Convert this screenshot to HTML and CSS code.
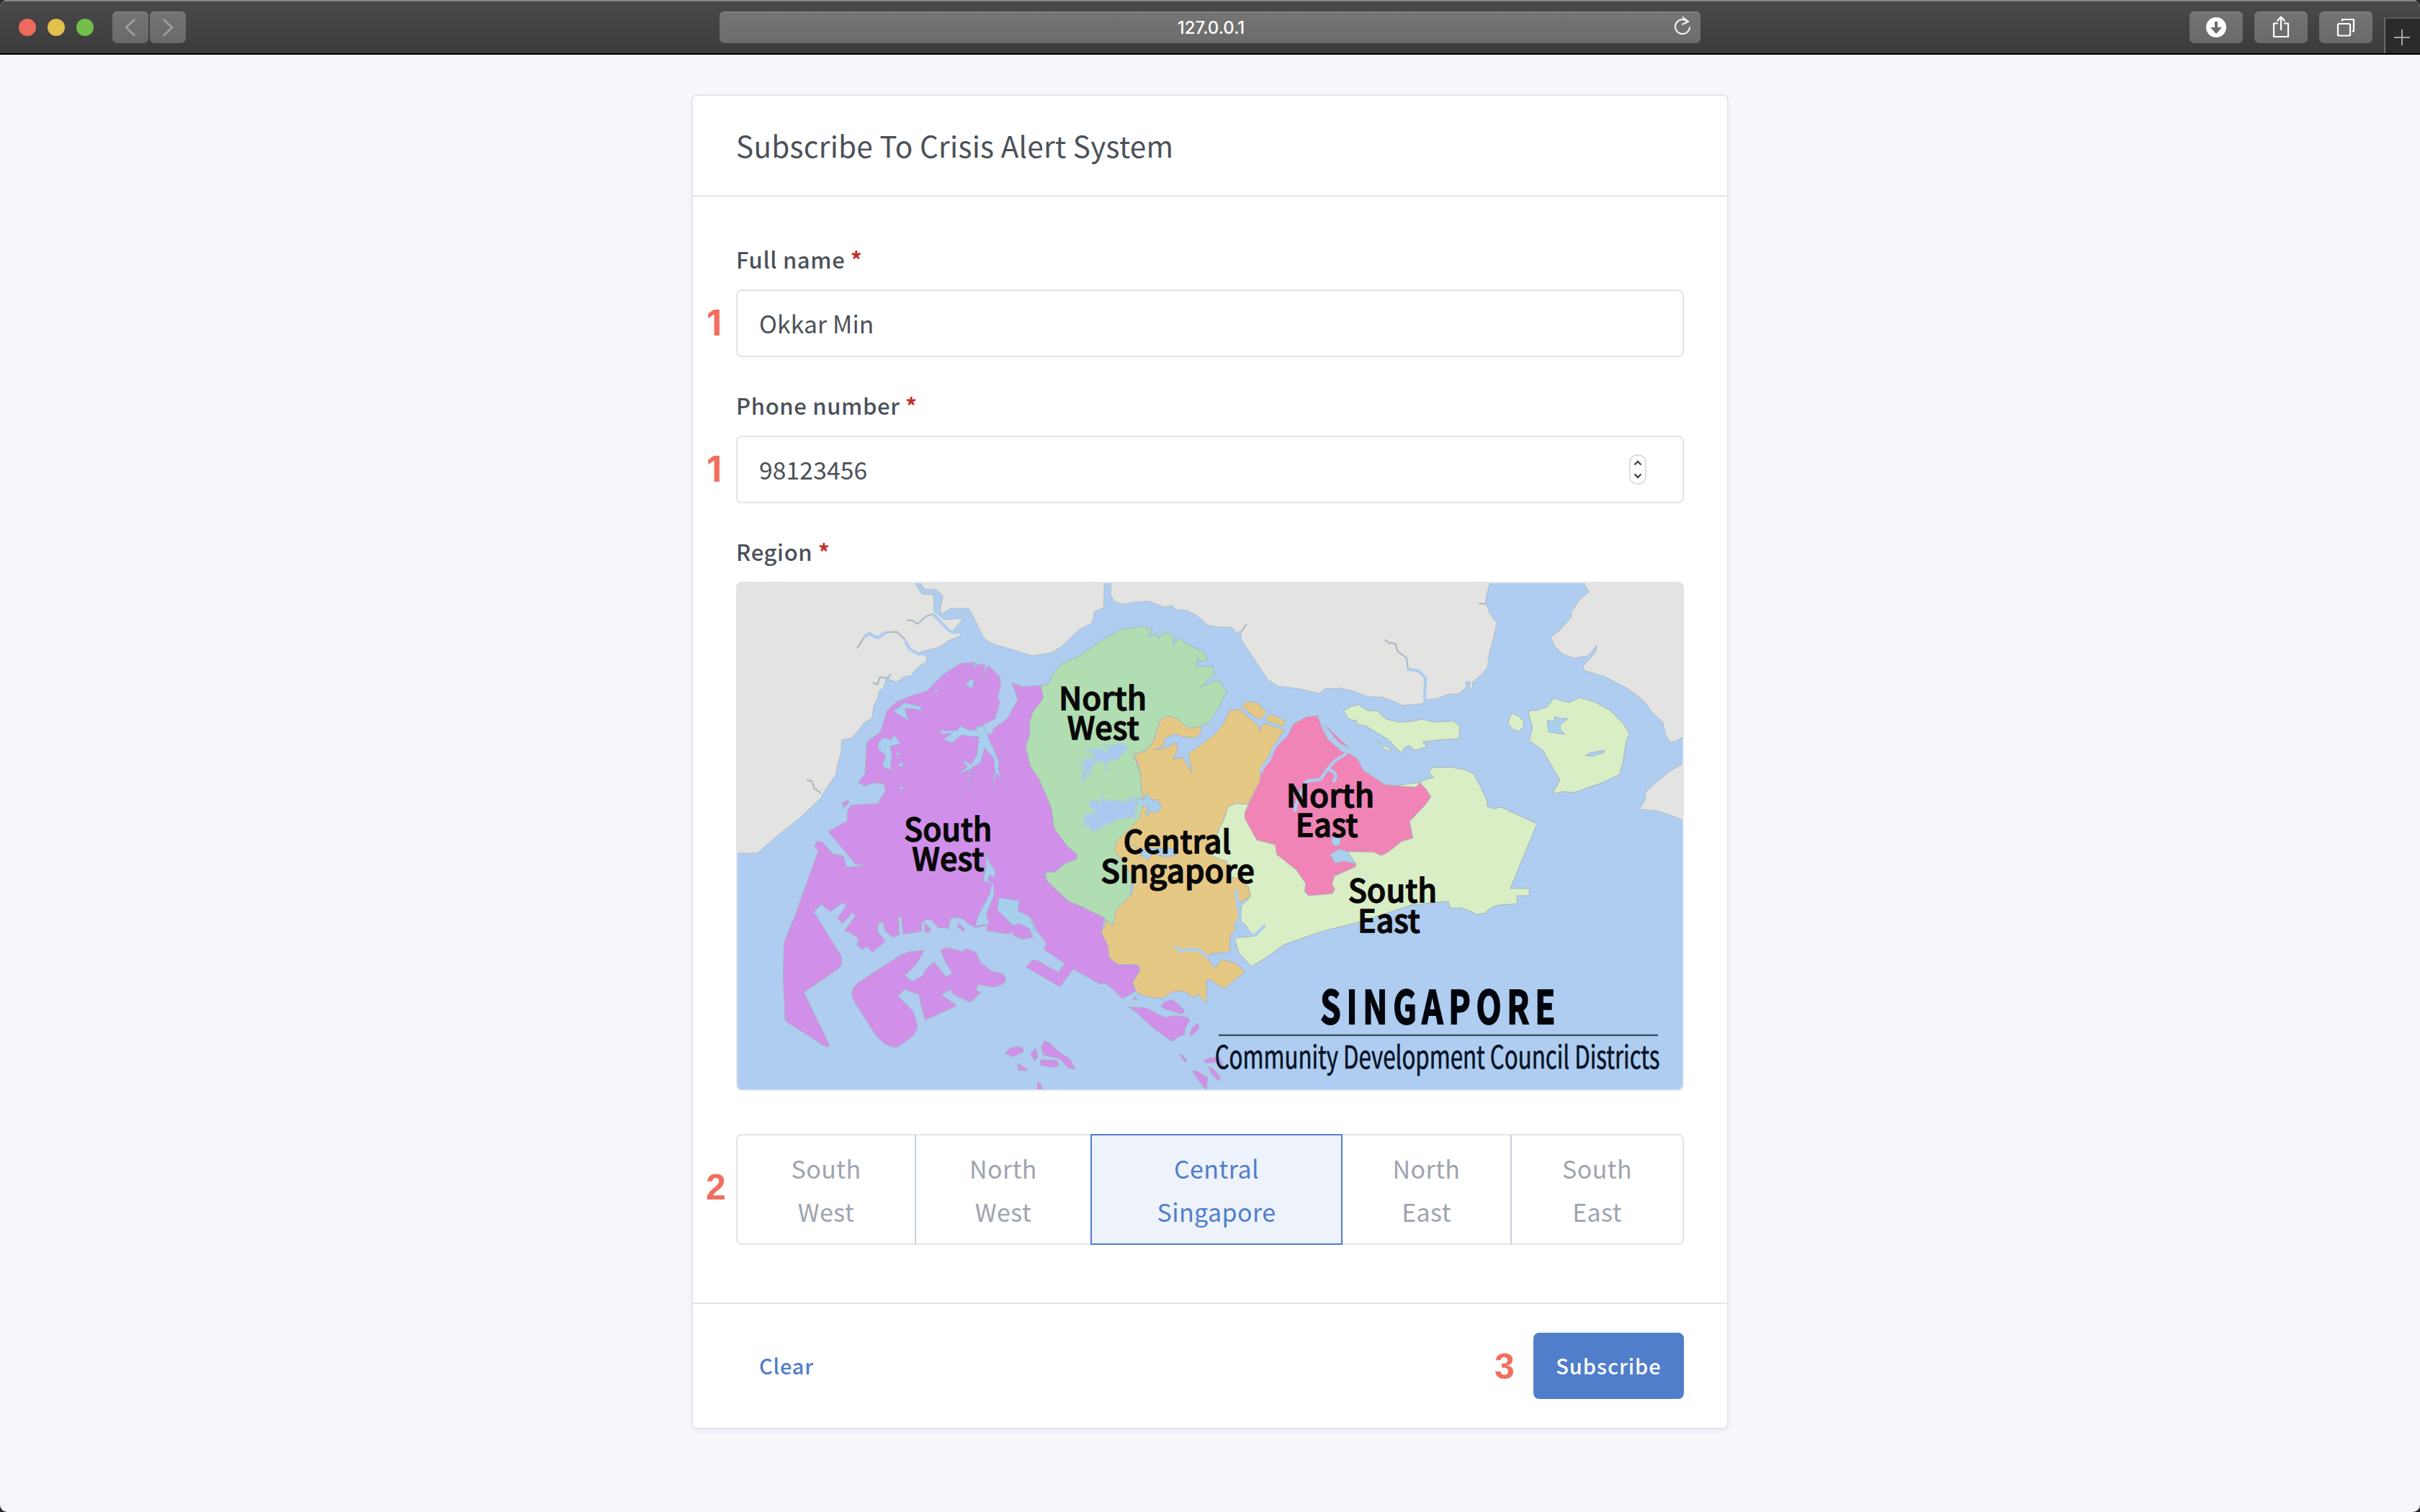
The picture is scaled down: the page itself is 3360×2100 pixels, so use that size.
FILE: index.html
```html
<!DOCTYPE html>
<html lang="en">
<head>
<meta charset="utf-8">
<title>Subscribe To Crisis Alert System</title>
<link rel="stylesheet" href="styles.css">
</head>
<body>
<div class="window">
  <header class="toolbar">
    <div class="lights"><i class="light red"></i><i class="light yellow"></i><i class="light green"></i></div>
    <div class="nav">
      <span class="tool nav-btn"><svg width="50" height="44" viewBox="0 0 50 44"><path d="M30.500 11.500 19 22l11.500 11"/></svg></span>
      <span class="tool nav-btn"><svg width="50" height="44" viewBox="0 0 50 44"><path d="M19.500 11.500 31 22 19.500 33"/></svg></span>
    </div>
    <div class="address"><span>127.0.0.1</span>
      <svg class="reload" width="28" height="30" viewBox="0 0 28 30"><path d="M21.500 8.500A10 10 0 1 0 24 15.500"/><path d="M14 1.500l8 6.500-8.500 4"/></svg>
    </div>
    <div class="actions">
      <span class="tool"><svg width="74" height="44" viewBox="0 0 74 44"><circle cx="37" cy="22" r="14" fill="#fff"/><path d="M35 14h4v8h6l-8 9-8-9h6z" fill="#6c6c6c"/></svg></span>
      <span class="tool"><svg width="74" height="44" viewBox="0 0 74 44" class="line"><path d="M33 16.500h-6V35h20V16.500h-6M37 26V8M31.500 13.500 37 7.500l5.500 6"/></svg></span>
      <span class="tool"><svg width="74" height="44" viewBox="0 0 74 44" class="line"><rect x="26" y="17" width="17" height="16.500" rx="1.500"/><path d="M32 13.500V11h16v16.500h-2.500"/></svg></span>
    </div>
    <div class="new-tab"><svg width="48" height="50" viewBox="0 0 48 50"><path d="M12 26h22M23 15v22"/></svg></div>
  </header>

  <main class="page">
    <form class="card">
      <h1 class="card-header">Subscribe To Crisis Alert System</h1>
      <div class="card-body">
        <div class="field">
          <label class="label" for="name">Full name <b class="req">*</b></label>
          <div class="control"><span class="step one">1</span><input class="input" id="name" type="text" value="Okkar Min"></div>
        </div>
        <div class="field">
          <label class="label" for="phone">Phone number <b class="req">*</b></label>
          <div class="control"><span class="step one">1</span><input class="input" id="phone" type="text" value="98123456">
            <svg class="spinner" width="24" height="42" viewBox="0 0 24 42"><rect x="1" y="1" width="22" height="40" rx="10"/><path d="M7.500 14.500 12 10l4.500 4.500M7.500 27.500 12 32l4.500-4.500"/></svg>
          </div>
        </div>
        <div class="field">
          <div class="label">Region <b class="req">*</b></div>
          <div class="map">
            <svg width="1312" height="703" viewBox="72 60 3936 2109" preserveAspectRatio="none">
              <g class="johor">
                <path d="M40 30H800L812 62 840 105 888 108 890 178 935 212 1012 206 985 240 970 258 1003 262 1000 280 950 300 915 325 830 348 860 368 860 385 815 418 797 445 765 450 735 472 705 462 690 460 682 492 660 512 658 535 640 570 632 620 600 642 570 680 545 706 507 712 503 770 487 820 482 858 435 925 420 955 330 1040 240 1110 155 1185 40 1186z"/>
                <path d="M835 30V62L850 85 900 88 928 115 916 165 922 190 960 165 1035 165 1060 210 1085 265Q1100 300 1140 315L1220 338 1300 362 1380 350 1420 325 1500 250 1550 225 1558 180 1598 160 1600 30z"/>
                <path d="M1632 30L1625 105 1640 135 1675 148 1720 140 1785 135 1850 160 1885 153 1895 170 1940 172 1985 195 2030 235 2080 243 2130 243 2150 265 2168 262 2170 295 2200 340 2250 415 2280 460 2320 488 2410 500 2496 520 2518 500 2582 497 2646 512 2695 533 2754 535 2796 548 2845 570 2925 562 2941 545 2984 542 3032 523 3075 520 3107 495 3105 470 3125 472 3120 490 3135 510 3132 475 3171 440 3195 412 3204 350 3220 290 3234 225 3204 185 3188 140 3191 110 3206 62V30z"/>
                <path d="M3600 30V65L3619 95 3579 130 3544 180 3546 200 3498 255 3459 285 3477 325 3514 358 3557 372 3616 362 3651 318 3648 345 3595 405 3598 423 3686 450 3782 500 3841 545 3884 600 3927 640 3937 690 3956 722 3980 718 4030 690V30z"/>
                <path d="M4030 800L3954 845 3900 890 3855 928 3852 965 3827 1002 3900 1008 3954 1025 4030 1055z"/>
              </g>
              <g class="creek">
                <path class="thin" d="M778 215 800 215 822 230 858 198 885 188"/><path d="M885 188 910 212 940 245 965 265 1000 262"/>
                <path class="thin" d="M570 332 605 275M690 265 735 262 770 295"/><path d="M600 285 620 270 655 288 690 265M770 300 790 335 825 355 880 350"/>
                <path class="thin" d="M635 475 655 482 665 452 700 455 710 438M360 880 382 885 392 915 420 935"/>
                <path class="thin" d="M2170 262 2192 232M2768 295 2785 308 2812 312 2822 345 2858 370 2865 418"/>
                <path d="M2860 418 2910 425 2938 455 2935 510 2935 550"/>
                <path class="thin" d="M3160 145H3190"/>
              </g>
              <g class="se">
                <path d="M2596 592 2625 575 2657 566 2695 590 2738 592 2770 625 2829 640 2882 635 2925 627 2968 638 3054 635 3080 655 3077 708 3000 712 2925 722 2946 740 2893 757 2871 735 2850 745 2841 768 2812 745 2791 718 2764 700 2689 655 2657 650 2649 632 2620 628z"/>
                <path d="M3370 590 3402 590 3445 575 3471 540 3536 558 3579 536 3643 555 3707 590 3761 645 3788 690 3775 710 3761 800 3745 858 3664 895 3557 932 3514 928 3466 938 3498 880 3439 780 3429 758 3370 715 3384 660 3368 610z"/>
                <path d="M3300 603 3325 612 3345 635 3347 658 3325 677 3300 668 3282 645 3288 618z"/>
                <path d="M2735 715 2760 735 2785 745 2795 765 2765 750z"/>
              </g>
              <path class="nw" d="M1335 488 1365 480 1385 440 1415 400 1500 360 1600 290 1680 250 1760 240 1800 250 1780 285 1820 268 1825 290 1850 262 1890 280 1885 318 1910 290 1960 322 2015 345 2028 380 1998 385 1990 368 1985 408 2050 405 2060 440 2000 492 2075 462 2110 512 2070 590 2035 640 2000 658 1950 665 1905 625 1870 613 1830 640 1805 720 1780 755 1720 775 1750 850 1760 950 1740 1130 1700 1400 1635 1490 1600 1455 1510 1410 1450 1385 1360 1300 1352 1265 1395 1262 1440 1225 1480 1210 1485 1190 1440 1150 1390 1080 1380 1000 1330 880 1290 820 1272 740 1290 690 1288 640 1300 600 1345 540z"/>
              <g class="sw">
                <path d="M1215 475 1260 492 1335 485 1345 540 1300 600 1288 640 1290 690 1272 740 1290 820 1330 880 1380 1000 1390 1080 1440 1150 1485 1190 1485 1210 1440 1225 1395 1262 1352 1265 1360 1300 1450 1385 1510 1410 1600 1455 1588 1515 1615 1570 1620 1620 1655 1648 1740 1650 1750 1670 1717 1725 1730 1760 1675 1792 1640 1755 1600 1725 1585 1732 1470 1668 1415 1742 1275 1660 1300 1630 1320 1632 1408 1682 1435 1645 1348 1585 1358 1560 1320 1510 1296 1455 1275 1475 1303 1535 1263 1543 1223 1530 1217 1512 1200 1522 1108 1508 1114 1485 1062 1495 1033 1480 1010 1458 975 1452 959 1458 951 1498 907 1495 880 1465 861 1460 840 1475 838 1510 761 1522 755 1450 742 1450 746 1525 718 1535 687 1510 678 1470 660 1475 655 1510 687 1552 634 1598 614 1575 591 1585 571 1570 575 1540 540 1515 517 1510 563 1445 551 1432 509 1478 488 1455 525 1405 511 1390 459 1428 419 1398 390 1430 505 1615 505 1650 494 1665 348 1765 453 1980 448 1993 425 1983 270 1883 262 1680 266 1555 310 1450 408 1175 393 1155 402 1135 425 1138 471 1190 511 1195 528 1245 603 1235 563 1230 530 1190 450 1095 530 1050 530 1010 545 985 660 978 668 955 690 925 680 895 640 892 600 905 575 890 603 855 610 730 620 712 665 685 680 640 695 590 735 555 800 528 860 510 930 440 1000 395 1060 390 1055 412 1080 398 1105 400 1095 450 1115 402 1165 450 1168 490 1155 535 1165 555 1145 625 1085 655 1095 690 1130 690 1140 665 1195 625 1240 545z"/>
                <path d="M850 1590 792 1595Q760 1602 735 1620L574 1725Q545 1750 549 1780L563 1810 626 1910Q660 1965 689 1980 730 2005 750 1985L792 1955Q825 1925 821 1900L804 1845 741 1780 767 1752 829 1775 836 1820 855 1880 985 1820 922 1775 959 1752 970 1772 1042 1807 1085 1765 1065 1755 1073 1732 1137 1743Q1190 1735 1190 1705 1180 1680 1131 1678L1085 1640 1062 1595 1022 1583 1010 1595 941 1577 918 1592 939 1640 967 1685 941 1700 890 1638 855 1670 844 1695 798 1720 769 1695 815 1650z"/>
                <path d="M508 975 530 965 538 972 515 995zM852 1475 875 1500 872 1515 852 1515zM990 1475 1018 1500 1015 1512 990 1495z"/>
                <g transform="translate(1200 930)">
                  <path d="M500 895 575 900 650 940 700 932 750 940 755 955 735 985 735 1010 710 1018 682 1040 600 980 530 915z"/>
                  <path d="M635 893 650 875 680 866 700 878 735 912 725 925 655 905zM755 1010 765 985 790 962 795 985 765 1015zM712 1095 725 1095 745 1120 735 1125z"/>
                  <path d="M-14 1090 5 1068 40 1060 60 1066 63 1082 20 1103zM92 1090 115 1068 122 1105 110 1120zM138 1060 150 1038 170 1045 220 1090 255 1110 280 1155 250 1150 215 1112 145 1095zM135 1115 205 1120 208 1140 190 1148 132 1138zM38 1130 80 1155 75 1162 42 1158zM122 1207 135 1215 142 1240H122z"/>
                  <path d="M765 1162 790 1165 830 1190 825 1240 815 1232zM833 1145 855 1155 885 1190 875 1202 850 1180zM812 1120 840 1108 880 1105 905 1160 870 1125 825 1130zM520 858 532 855 535 865 524 866z"/>
                </g>
              </g>
              <g class="central">
                <path d="M1720 775 1780 755 1805 720 1830 640Q1845 615 1870 613L1905 625 1950 665 2000 658 2005 680 1980 705 1930 700 1890 688 1855 705 1845 740 1805 755 1850 748 1900 725 1905 755 1885 795 1925 785 1965 850 1950 770 2000 735 2060 690 2100 640 2120 590 2165 585 2200 620 2240 650 2248 680 2255 650 2270 645 2350 672 2305 735 2280 790 2250 830 2250 880 2190 1000 2195 982 2150 977 2115 990 2100 1040 2075 1090 2050 1198 2110 1220 2160 1290 2200 1325 2210 1365 2165 1390 2150 1395 2160 1460 2138 1480 2148 1500 2125 1525 2122 1595 2040 1605 2035 1630 2060 1665 2090 1627 2150 1645 2185 1680 2100 1748 2070 1735 2050 1715 2025 1710 2025 1810 1985 1770 1975 1790 1935 1760 1885 1762 1840 1790 1790 1785 1740 1770 1717 1725 1750 1670 1740 1650 1655 1648 1620 1620 1615 1570 1588 1515 1605 1480 1600 1458 1635 1490 1650 1420 1715 1355 1725 1300 1665 1200 1642 1180 1650 1135 1700 1090 1745 1040 1765 970 1755 930 1750 850 1735 800z"/>
                <path d="M2172 572 2195 552 2240 560 2278 600 2250 628 2220 615zM2288 606 2330 620 2355 640 2345 658 2270 630z"/>
              </g>
              <path class="se" d="M2195 982 2150 977 2115 990 2100 1040 2075 1090 2050 1198 2110 1220 2130 1285 2160 1290 2200 1325 2210 1365 2170 1405 2168 1470 2185 1480 2205 1512 2228 1530 2142 1538 2160 1600 2212 1658 2280 1615 2350 1565 2510 1510 2650 1475 2807 1425 2882 1400 3032 1385 3041 1415 3086 1412 3129 1428 3150 1440 3188 1435 3200 1418 3236 1402 3319 1395V1362H3370V1332H3291L3402 1062 3321 1025 3252 993 3220 1000 3195 990 3193 965 3166 905 3139 855 3107 838 3043 827 2985 827 2963 830 2952 850 2973 870 2945 875 2914 890z"/>
              <g class="ne">
                <path d="M2488 612 2440 618 2390 645 2360 700 2305 745 2285 800 2255 835 2250 880 2220 940 2185 1015V1040L2235 1130 2312 1150 2318 1190 2400 1255 2438 1310 2435 1345 2450 1362 2550 1353 2560 1335 2548 1315 2558 1280 2645 1242 2648 1230 2605 1178 2721 1180 2754 1195 2786 1178 2839 1135 2885 1122 2871 1052 2936 985 2960 950 2941 920 2914 890 2898 910 2861 908 2770 900 2679 840 2652 790 2625 773 2590 762 2530 710 2505 660z"/>
                <path d="M2516 648 2550 680 2580 710 2620 747 2575 722z"/>
              </g>
              <g class="water">
                <path d="M720 590 750 575 765 558 830 572 842 592 800 582 770 582 775 610 790 635 745 608zM660 720 685 703 712 715 725 692 750 728 708 740 715 790 708 820 718 838 685 828 675 820 690 780 658 750zM735 762 752 770 735 780zM745 815 760 805 762 825 740 822zM1022 485 1040 462 1058 465 1048 500zM895 500 908 505 897 520zM748 902 762 915 750 920zM1060 398 1075 395 1060 412z"/>
                <path d="M1100 655 1065 660 1070 672 1035 672 1003 656 985 675 915 675 920 688 965 685 930 712 965 725 1005 692 1060 700 1078 700 1068 780 1045 815 1005 795 1030 825 990 855 1040 835 1030 912 1045 830 1085 808 1100 745 1140 790 1145 850 1130 918 1152 852 1170 870 1158 838 1160 800 1115 700z"/>
                <path d="M1105 1190 1125 1230 1145 1260 1145 1285 1120 1275 1115 1295 1140 1320 1140 1360 1108 1440 1120 1480 1062 1488 1075 1445 1125 1350 1130 1310 1095 1300 1108 1240z"/>
                <path d="M1162 1370 1246 1383 1240 1425 1290 1450 1312 1510 1290 1500 1250 1480 1217 1485 1154 1420z"/>
                <path class="reservoir" d="M1705 735 1680 725 1650 728 1610 740 1585 720 1600 750 1560 745 1510 750 1540 765 1520 775 1560 785 1470 800 1520 805 1475 830 1515 825 1495 895 1530 870 1530 840 1548 885 1550 820 1580 800 1595 805 1605 855 1612 805 1660 795 1700 745z"/>
                <path class="reservoir" d="M1590 920 1600 960 1660 965 1690 970 1705 948 1730 955 1738 985 1735 1040 1700 1040 1650 1050 1610 1070 1570 1090 1545 1105 1540 1080 1505 1070 1520 1045 1500 1030 1530 1020 1560 1015 1530 985 1545 960 1580 968z"/>
                <path d="M1728 958 1765 960 1775 935 1800 965 1820 960 1838 995 1820 1015 1790 1010 1780 1030 1770 1020 1785 995 1740 985zM1715 1145 1745 1170 1790 1165 1850 1165 1900 1165 1895 1195 1850 1200 1800 1185 1780 1215 1765 1195 1750 1200 1755 1180z"/>
                <path d="M2548 1120 2585 1118 2580 1150 2560 1155 2546 1140zM2540 1190 2580 1168 2615 1180 2648 1230 2600 1218 2560 1225z"/>
                <path d="M3445 630 3470 638 3477 615 3495 622 3530 625 3498 650 3500 672 3520 690 3482 685 3450 680zM3605 778 3621 768 3680 756 3684 765 3632 780z"/>
                <path class="creek-line" d="M2610 768 2560 800 2525 840 2500 878 2440 885M2530 835 2555 845 2565 862 2555 890M2440 885 2425 920 2398 985 2393 1012M2360 690 2310 740 2285 800 2258 830 2253 850"/>
                <path class="creek-line" d="M2148 1335 2155 1400 2165 1450 2150 1480 2165 1520M2205 1525 2230 1525 2270 1485M1895 1575 1915 1592 1960 1585 2000 1592 2030 1620 2130 1605M2133 1590 2145 1520M2250 655 2280 600"/>
              </g>
              <path class="bridge" d="M1738 985 1760 980 1750 1020 1738 1035z"/>
              <g class="names">
                <text x="766" y="1133" textLength="366" lengthAdjust="spacingAndGlyphs">South</text><text x="799" y="1258" textLength="300" lengthAdjust="spacingAndGlyphs">West</text>
                <text x="1410" y="589" textLength="366" lengthAdjust="spacingAndGlyphs">North</text><text x="1445" y="712" textLength="300" lengthAdjust="spacingAndGlyphs">West</text>
                <text x="1679" y="1186" textLength="449" lengthAdjust="spacingAndGlyphs">Central</text><text x="1585" y="1308" textLength="641" lengthAdjust="spacingAndGlyphs">Singapore</text>
                <text x="2357" y="992" textLength="368" lengthAdjust="spacingAndGlyphs">North</text><text x="2396" y="1116" textLength="260" lengthAdjust="spacingAndGlyphs">East</text>
                <text x="2615" y="1389" textLength="370" lengthAdjust="spacingAndGlyphs">South</text><text x="2655" y="1514" textLength="260" lengthAdjust="spacingAndGlyphs">East</text>
              </g>
              <text class="country" transform="translate(2500 1897) scale(.72 1)" textLength="1358">SINGAPORE</text>
              <path class="rule" d="M2076 1943H3906"/>
              <text class="caption" x="2060" y="2083" textLength="1853" lengthAdjust="spacingAndGlyphs">Community Development Council Districts</text>
            </svg>
          </div>
          <div class="regions"><span class="step">2</span>
            <button type="button" class="region sw-btn">South<br>West</button>
            <button type="button" class="region nw-btn">North<br>West</button>
            <button type="button" class="region selected">Central<br>Singapore</button>
            <button type="button" class="region ne-btn">North<br>East</button>
            <button type="button" class="region se-btn">South<br>East</button>
          </div>
        </div>
      </div>
      <footer class="card-footer">
        <button type="reset" class="clear">Clear</button>
        <div class="submit"><span class="step">3</span><button type="submit" class="subscribe">Subscribe</button></div>
      </footer>
    </form>
  </main>
</div>
</body>
</html>
```
FILE: styles.css
```css
* { box-sizing: border-box; }
body { margin: 0; background: #2b2b2b; font-family: "Noto Sans CJK SC", "Open Sans", sans-serif; color: #4b5159; }
.window { width: 3360px; height: 2100px; background: #f5f7fb; border-radius: 10px; overflow: hidden; display: flex; flex-direction: column; }

/* browser toolbar */
.toolbar { height: 76px; flex: none; display: flex; align-items: flex-start; padding-left: 26px; background: linear-gradient(#4a4a4a, #3b3b3b); border-top: 2px solid #858585; border-bottom: 2px solid #000; }
.lights { display: flex; gap: 16px; margin-top: 24px; }
.light { width: 24px; height: 24px; border-radius: 50%; }
.red { background: #ee6a5f; }
.yellow { background: #e1c04c; }
.green { background: #71bf4a; }
.nav { display: flex; gap: 2px; margin: 14px 0 0 26px; }
.tool { display: block; width: 74px; height: 44px; border-radius: 7px; background: linear-gradient(#747474, #696969); box-shadow: inset 0 1px 0 #8c8c8c; }
.tool svg { display: block; }
.nav-btn { width: 50px; }
.nav-btn path { fill: none; stroke: #a0a0a0; stroke-width: 2.600; stroke-linecap: round; stroke-linejoin: round; }
.address { position: relative; display: flex; justify-content: center; align-items: center; width: 1362px; height: 44px; margin: 14px 0 0 741px; padding: 1px 0 0 3px; border-radius: 7px; background: linear-gradient(#757575, #6c6c6c); box-shadow: inset 0 1px 0 #939393; color: #fff; font: 500 24px Inter, sans-serif; }
.reload { position: absolute; right: 11px; top: 6px; fill: none; stroke: #f0f0f0; stroke-width: 2.200; }
.actions { display: flex; gap: 16px; margin: 14px 0 0 679px; }
.line { fill: none; stroke: #fff; stroke-width: 2.200; stroke-linejoin: round; }
.new-tab { width: 50px; height: 50px; margin: 22px 0 0 16px; border-left: 2px solid #6a6a6a; border-top: 2px solid #5a5a5a; background: #2b2b2b; }
.new-tab path { stroke: #a5a5a5; stroke-width: 2; }

/* card */
.page { display: flex; justify-content: center; align-items: flex-start; padding-top: 55px; }
.card { width: 1440px; background: #fff; border: 2px solid #e2e5ec; border-radius: 8px; box-shadow: 0 4px 8px rgba(30, 40, 70, .04); }
.card-header { margin: 0; height: 140px; padding: 0 60px; font-size: 40.5px; font-weight: 400; line-height: 137px; letter-spacing: .26px; border-bottom: 2px solid #e1e5eb; }
.card-body { display: flex; flex-direction: column; gap: 46px; padding: 66px 60px 80px; }
.label { display: block; height: 40px; margin-bottom: 23px; font-size: 31px; line-height: 42px; font-weight: 500; letter-spacing: .65px; }
.req { color: #c0302b; }
.control { position: relative; }
.input { display: block; width: 100%; height: 94px; padding: 0 30px 2px; border: 2px solid #e1e5eb; border-radius: 8px; background: #fff; font: 400 33.6px "Noto Sans CJK SC", sans-serif; letter-spacing: .15px; color: #4b5159; outline: 0; }
.spinner { position: absolute; right: 52px; top: 26px; }
.spinner rect { fill: #fff; stroke: #d5d5d5; stroke-width: 1.500; }
.spinner path { fill: none; stroke: #444; stroke-width: 2.400; }
.step { position: absolute; left: -42px; top: 18px; font: 700 50px/58px "Liberation Sans", Arial, sans-serif; color: #f06f5e; }
.one { left: -41px; font-family: Inter, sans-serif; font-size: 49px; }

/* district map */
.map { height: 707px; border: 2px solid #e1e5eb; border-radius: 8px; background: #aecdf0; overflow: hidden; }
.map svg { display: block; }
.johor path { fill: #e3e3e2; stroke: #b3bcc5; stroke-width: 3; }
.creek path, .creek-line { fill: none; stroke: #aecdf0; stroke-width: 13; stroke-linejoin: round; }
.creek .thin { stroke: #afbac6; stroke-width: 7; }
.sw path, .nw, .central path, .se, .se path, .ne path { stroke: #a9b2bd; stroke-width: 3; stroke-linejoin: round; }
.sw path { fill: #d08fe9; }
.nw { fill: #b1ddb2; }
.central path { fill: #e6c885; }
.se, .se path { fill: #d9eec5; }
.ne path { fill: #f084b6; }
.water path { fill: #a9cfef; stroke: #9fb4cf; stroke-width: 3; }
.water .creek-line { fill: none; stroke: #abcdef; stroke-width: 13; }
.water .reservoir { fill: #a9c9f0; stroke: #b1ddb2; stroke-width: 20; stroke-dasharray: 5 13; }
.bridge { fill: #b1ddb2; }
.names { font-size: 132px; font-weight: 500; fill: #080808; stroke: #080808; stroke-width: 4; }
.country { font-size: 190px; font-weight: 700; fill: #02060c; stroke: #02060c; stroke-width: 6; }
.caption { font-size: 130px; fill: #071326; stroke: #071326; stroke-width: 2; }
.rule { stroke: #26374a; stroke-width: 6; }

/* region picker */
.regions { position: relative; display: flex; height: 154px; margin-top: 60px; }
.regions .step { top: 45px; }
.region { padding: 15px 0 13px; border: 2px solid #e1e5eb; border-left-color: #c9d1de; background: #fff; font: 400 34px/60px "Noto Sans CJK SC", sans-serif; letter-spacing: .4px; color: #9ea4af; margin-left: -2px; }
.sw-btn { width: 250px; margin-left: 0; border-left-color: #e1e5eb; border-radius: 8px 0 0 8px; }
.nw-btn { width: 246px; }
.selected { position: relative; width: 350px; border-color: #507ecb; background: #edf2fb; color: #507ecb; }
.ne-btn { width: 237px; }
.se-btn { width: 241px; border-radius: 0 8px 8px 0; }

/* footer */
.card-footer { display: flex; justify-content: space-between; height: 174px; padding: 40px 60px; border-top: 2px solid #e1e5eb; }
.clear, .subscribe { height: 92px; border: 0; padding: 0 0 2px; border-radius: 8px; font: 500 29px "Noto Sans CJK SC", sans-serif; letter-spacing: .8px; }
.clear { padding-left: 32px; background: none; color: #507ecb; }
.submit { position: relative; }
.submit .step { left: -54px; top: 18px; }
.subscribe { width: 209px; background: #507ecb; color: #fff; letter-spacing: 1px; }
```
